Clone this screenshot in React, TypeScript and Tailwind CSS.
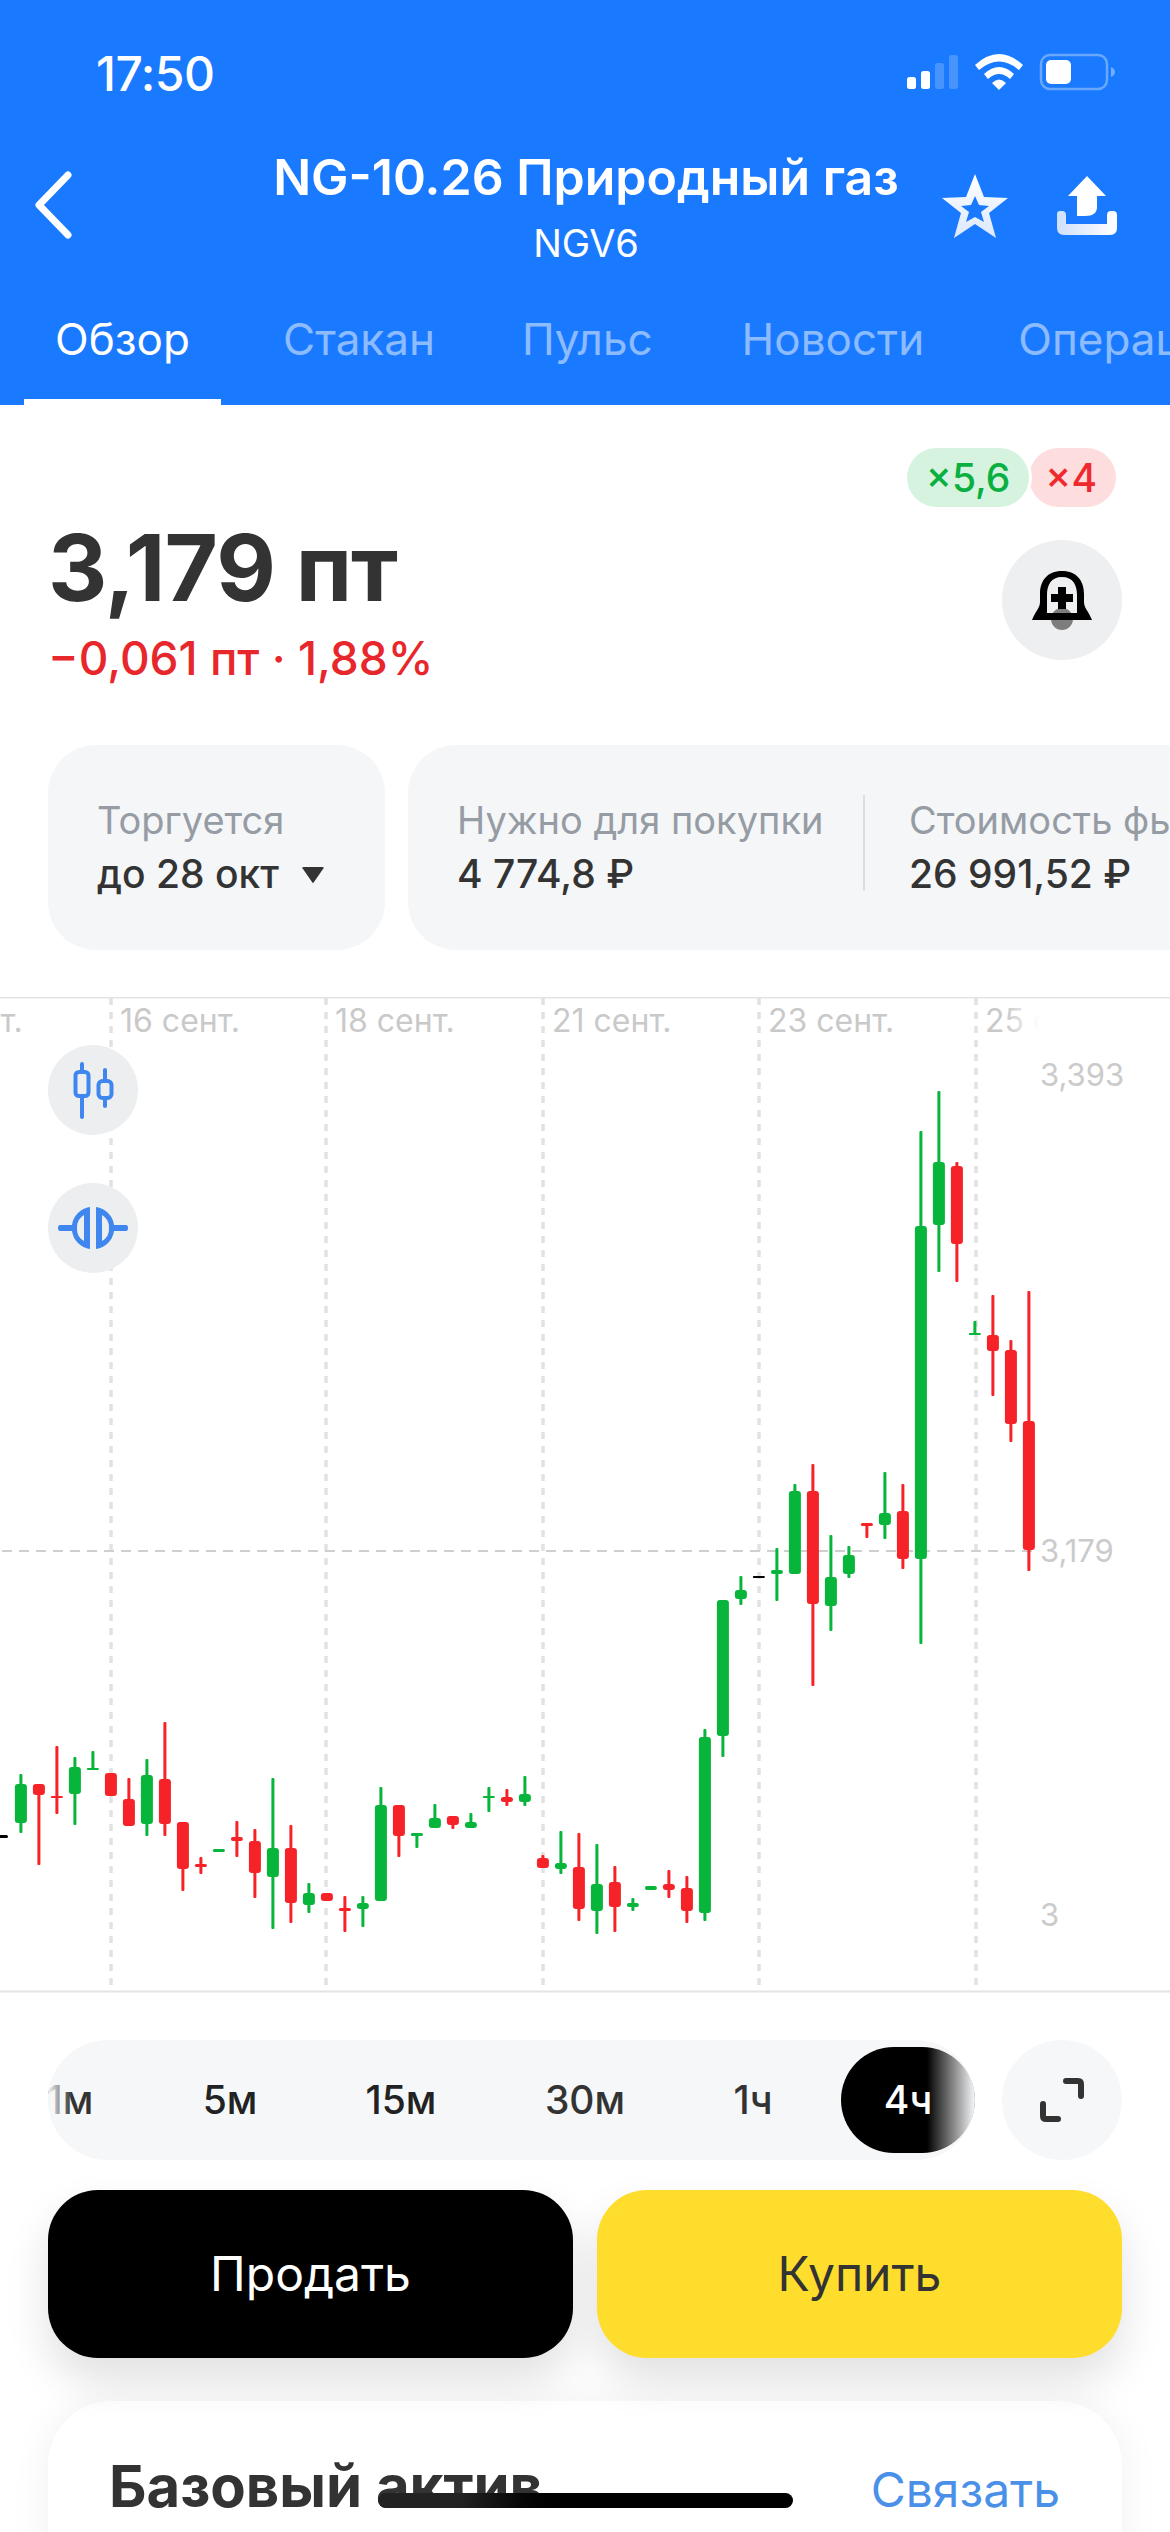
import React from "react";

const G = "#06b539";
const R = "#f52228";
const K = "#000000";
const raw: Array<[number, string, number, number, number, number]> = [
  [0, G, 1774, 1833, 1784, 1823],
  [1, R, 1784, 1865, 1784, 1795],
  [2, R, 1746, 1814, 1796, 1798],
  [3, G, 1757, 1825, 1767, 1794],
  [4, G, 1751, 1770, 1768, 1770],
  [5, R, 1773, 1796, 1773, 1796],
  [6, R, 1778, 1826, 1799, 1826],
  [7, G, 1759, 1836, 1775, 1824],
  [8, R, 1722, 1836, 1779, 1824],
  [9, R, 1822, 1891, 1822, 1869],
  [10, R, 1857, 1874, 1864, 1867],
  [11, G, 1849, 1852, 1849, 1852],
  [12, R, 1821, 1857, 1837, 1841],
  [13, R, 1829, 1898, 1841, 1873],
  [14, G, 1778, 1929, 1848, 1877],
  [15, R, 1825, 1923, 1848, 1903],
  [16, G, 1883, 1913, 1893, 1905],
  [17, R, 1893, 1901, 1893, 1901],
  [18, R, 1896, 1932, 1908, 1911],
  [19, G, 1896, 1927, 1903, 1909],
  [20, G, 1787, 1901, 1805, 1901],
  [21, R, 1805, 1857, 1805, 1836],
  [22, G, 1833, 1848, 1833, 1836],
  [23, G, 1804, 1828, 1818, 1828],
  [24, R, 1816, 1829, 1816, 1825],
  [25, G, 1813, 1828, 1822, 1828],
  [26, G, 1787, 1812, 1796, 1798],
  [27, R, 1789, 1806, 1797, 1802],
  [28, G, 1776, 1806, 1794, 1802],
  [29, R, 1855, 1868, 1858, 1868],
  [30, G, 1831, 1874, 1863, 1869],
  [31, R, 1833, 1921, 1867, 1909],
  [32, G, 1844, 1934, 1884, 1911],
  [33, R, 1866, 1932, 1882, 1907],
  [34, G, 1898, 1911, 1903, 1907],
  [35, G, 1886, 1890, 1886, 1890],
  [36, R, 1870, 1898, 1884, 1890],
  [37, R, 1876, 1923, 1888, 1911],
  [38, G, 1729, 1921, 1737, 1913],
  [39, G, 1600, 1757, 1600, 1736],
  [40, G, 1576, 1605, 1590, 1599],
  [41, K, 1576, 1578, 1576, 1578],
  [42, G, 1548, 1601, 1570, 1574],
  [43, G, 1484, 1574, 1491, 1574],
  [44, R, 1464, 1686, 1491, 1604],
  [45, G, 1535, 1631, 1577, 1606],
  [46, G, 1546, 1578, 1555, 1574],
  [47, R, 1523, 1538, 1523, 1526],
  [48, G, 1472, 1539, 1513, 1525],
  [49, R, 1484, 1569, 1511, 1559],
  [50, G, 1131, 1644, 1226, 1559],
  [51, G, 1091, 1272, 1162, 1225],
  [52, R, 1162, 1282, 1166, 1244],
  [53, G, 1321, 1335, 1333, 1335],
  [54, R, 1295, 1396, 1335, 1351],
  [55, R, 1340, 1442, 1350, 1424],
  [56, R, 1291, 1571, 1421, 1550],
];

const grid = [111, 326, 543, 759, 976];
const dates: Array<[number, string]> = [
  [-98, "14 сент."],
  [120, "16 сент."],
  [335, "18 сент."],
  [552, "21 сент."],
  [768, "23 сент."],
];

function Chart() {
  return (
    <svg viewBox="0 997 1170 996" width={1170} height={996} className="block">
      <defs>
        <linearGradient id="fadeDate" gradientUnits="userSpaceOnUse" x1="1006" y1="0" x2="1040" y2="0">
          <stop offset="0" stopColor="#c9c9c9" />
          <stop offset="1" stopColor="#c9c9c9" stopOpacity="0" />
        </linearGradient>
      </defs>
      <line x1="0" y1="997.5" x2="1170" y2="997.5" stroke="#e4e4e6" strokeWidth="2" />
      <line x1="0" y1="1991.5" x2="1170" y2="1991.5" stroke="#e4e4e6" strokeWidth="2" />
      {grid.map((x) => (
        <line key={x} x1={x} y1="998" x2={x} y2="1988" stroke="#e2e2e2" strokeWidth="3.5" strokeDasharray="7 7" />
      ))}
      <line x1="2" y1="1551" x2="1036" y2="1551" stroke="#cfcfcf" strokeWidth="2" strokeDasharray="10 7" />
      {dates.map(([x, t]) => (
        <text key={t} x={x} y="1032" fontSize="32" fill="#c9c9c9" fontFamily="Inter, sans-serif">
          {t}
        </text>
      ))}
      <text x="985" y="1032" fontSize="32" fill="url(#fadeDate)" fontFamily="Inter, sans-serif">
        25 сент.
      </text>
      <text x="1040" y="1086" fontSize="31" fill="#cbcbcb" fontFamily="Inter, sans-serif">3,393</text>
      <text x="1040" y="1562" fontSize="31" fill="#cbcbcb" fontFamily="Inter, sans-serif">3,179</text>
      <text x="1040" y="1926" fontSize="31" fill="#cbcbcb" fontFamily="Inter, sans-serif">3</text>
      <rect x="-4" y="1835" width="12" height="3" rx="1.5" fill="#000" />
      {raw.map(([i, c, wt, wb, bt, bb]) => {
        const x = 20.9 + 18 * i;
        const h = Math.max(bb - bt, 2);
        return (
          <g key={i} fill={c}>
            <rect x={x - 1.5} y={wt} width="3" height={wb - wt} rx="1" />
            <rect x={x - 6} y={bt} width="12" height={h} rx={Math.min(3, h / 2)} />
          </g>
        );
      })}
    </svg>
  );
}

function StatusIcons() {
  return (
    <svg width="212" height="40" viewBox="905 54 212 40" className="block">
      <rect x="907" y="79" width="9" height="12" rx="2.5" fill="#fff" />
      <rect x="921" y="73" width="9" height="18" rx="2.5" fill="#fff" />
      <rect x="935" y="65" width="9" height="26" rx="2.5" fill="#fff" fillOpacity="0.2" />
      <rect x="949" y="57" width="9" height="34" rx="2.5" fill="#fff" fillOpacity="0.2" />
      <path d="M975 67 Q999 45 1023 67 L1019 72 Q999 55 979 72 Z" fill="#fff" />
      <path d="M984 76 Q999 62 1014 76 L1010 81 Q999 71 988 81 Z" fill="#fff" />
      <path d="M992 85 Q999 78 1006 85 L999 92 Z" fill="#fff" />
      <rect x="1041" y="57" width="66" height="34" rx="9" fill="none" stroke="#fff" strokeOpacity="0.35" strokeWidth="2.5" />
      <rect x="1046" y="62" width="25" height="24" rx="5" fill="#fff" />
      <path d="M1111 69 Q1115 71 1115 74 Q1115 77 1111 79 Z" fill="#fff" fillOpacity="0.4" />
    </svg>
  );
}

function NavIcons() {
  return (
    <div className="flex items-center gap-[46px]">
      <svg width="70" height="66" viewBox="0 0 70 66" className="block">
        <defs>
          <linearGradient id="g1" x1="0" y1="0" x2="0" y2="1">
            <stop offset="0" stopColor="#ffffff" />
            <stop offset="1" stopColor="#dbe8fd" />
          </linearGradient>
        </defs>
        <path
          fillRule="evenodd"
          fill="url(#g1)"
          d="M35 1 L44 24 L68 25 L49 40 L56 65 L35 51 L14 65 L21 40 L2 25 L26 24 Z M35 23 L31 32 L21 33 L29 39 L26 49 L35 44 L44 49 L41 39 L49 33 L39 32 Z"
        />
      </svg>
      <svg width="62" height="62" viewBox="0 0 62 62" className="block">
        <defs>
          <linearGradient id="g2" x1="0" y1="0" x2="1" y2="0">
            <stop offset="0" stopColor="#cfe0fb" />
            <stop offset="1" stopColor="#ffffff" />
          </linearGradient>
        </defs>
        <path d="M31 1 L50 21 L41 21 L41 32 Q41 41 29 41 L21 41 L21 21 L12 21 Z" fill="#fff" />
        <path d="M1 39 Q1 36 4 36 L6 36 Q10 36 10 40 L10 49 L51 49 L51 40 Q51 36 55 36 L57 36 Q61 36 61 40 L61 53 Q61 60 54 60 L8 60 Q1 60 1 53 Z" fill="url(#g2)" />
      </svg>
    </div>
  );
}

function Bell() {
  return (
    <svg width="60" height="60" viewBox="0 0 60 60" className="block">
      <circle cx="30" cy="49" r="11" fill="#7d7d7d" />
      <path
        fillRule="evenodd"
        fill="#000"
        d="M30 1 C15 1 8 11 8 24 L8 32 C8 38 3 42 0 50 L60 50 C57 42 52 38 52 32 L52 24 C52 11 45 1 30 1 Z M30 7 C41 7 45 15 45 25 L45 43 L15 43 L15 25 C15 15 19 7 30 7 Z"
      />
      <path d="M26 17 L34 17 L34 24 L41 24 L41 32 L34 32 L34 39 L26 39 L26 32 L19 32 L19 24 L26 24 Z" fill="#000" />
    </svg>
  );
}

export default function App() {
  return (
    <div className="w-[1170px] h-[2532px] overflow-hidden bg-white relative font-['Inter',sans-serif] text-[#333333]">
      <header className="h-[405px] bg-[#1a7aff] text-white relative">
        <div className="flex items-start justify-between pl-[96px] pr-[53px] pt-[52px] h-[150px]">
          <span className="text-[48px] leading-[44px] font-medium tracking-[-0.5px]">17:50</span>
          <StatusIcons />
        </div>
        <div className="flex items-start h-[116px] pl-[34px] pr-[52px]">
          <div className="w-[192px] shrink-0 mt-[21px]">
            <svg width="40" height="68" viewBox="0 0 40 68" className="block">
              <path d="M34 4 L5 34 L34 64" fill="none" stroke="#fff" strokeWidth="7" strokeLinecap="round" strokeLinejoin="round" />
            </svg>
          </div>
          <div className="flex-1 flex flex-col items-center mt-0 pl-[18px]">
            <div className="text-[50px] leading-[54px] font-semibold whitespace-nowrap">NG-10.26 Природный газ</div>
            <div className="text-[38px] leading-[44px] mt-[17px]">NGV6</div>
          </div>
          <div className="w-[190px] shrink-0 mt-[23px] flex justify-end">
            <NavIcons />
          </div>
        </div>
        <nav className="flex items-start pl-[24px] h-[139px] overflow-hidden text-[44px] leading-[54px] text-white/50 whitespace-nowrap">
          <div className="w-[197px] h-[139px] flex flex-col items-center justify-between text-white shrink-0">
            <span className="mt-[46px]">Обзор</span>
            <span className="block w-full h-[6px] bg-white" />
          </div>
          <span className="ml-[62px] mt-[46px]">Стакан</span>
          <span className="ml-[87px] mt-[46px]">Пульс</span>
          <span className="ml-[89px] mt-[46px]">Новости</span>
          <span className="ml-[94px] mt-[46px]">Операции</span>
        </nav>
      </header>

      <section className="h-[592px] relative">
        <div className="flex flex-col items-end pt-[43px] pr-[48px]">
          <div className="flex items-center pr-[6px]">
            <div className="h-[59px] px-[19px] rounded-full bg-[#d6f3e0] text-[#0ab03f] text-[39px] leading-[59px] font-medium ring-[3px] ring-white z-10">
              ×5,6
            </div>
            <div className="h-[59px] pl-[16px] pr-[19px] rounded-full bg-[#fedddf] text-[#ee2a2e] text-[39px] leading-[59px] font-medium">
              ×4
            </div>
          </div>
        </div>
        <div className="flex items-start justify-between pl-[48px] pr-[48px] mt-[33px]">
          <div className="-mt-[22px]">
            <div className="text-[92px] leading-[100px] font-bold tracking-[-1px] text-[#333333]">3,179 пт</div>
            <div className="text-[46px] leading-[54px] font-medium text-[#e7272c] mt-[13px]">−0,061 пт · 1,88%</div>
          </div>
          <div className="w-[120px] h-[120px] rounded-full bg-[#eeeff1] flex items-center justify-center">
            <Bell />
          </div>
        </div>
        <div className="flex gap-[23px] pl-[48px] mt-[60px] h-[205px] whitespace-nowrap leading-[50px]">
          <div className="w-[337px] shrink-0 rounded-[48px] bg-[#f5f6f8] pl-[49px] pt-[50px]">
            <div className="text-[#969ca4] text-[38px]">Торгуется</div>
            <div className="text-[39px] font-medium flex items-center mt-[4px]">
              до 28 окт
              <svg width="24" height="18" viewBox="0 0 24 18" className="ml-[22px] mt-[3px]">
                <path d="M2 2 Q0 0 3 0 L21 0 Q24 0 22 2 L13 15 Q12 17 11 15 Z" fill="#333" />
              </svg>
            </div>
          </div>
          <div className="flex-1 rounded-l-[48px] bg-[#f5f6f8] flex pt-[50px] pl-[49px] overflow-hidden">
            <div className="w-[408px] shrink-0 h-[96px] border-r-2 border-[#dcdee2]">
              <div className="text-[#969ca4] text-[38px]">Нужно для покупки</div>
              <div className="text-[39px] font-medium mt-[4px]">4 774,8 ₽</div>
            </div>
            <div className="pl-[44px] shrink-0">
              <div className="text-[#969ca4] text-[38px]">Стоимость фьючерса</div>
              <div className="text-[39px] font-medium mt-[4px]">26 991,52 ₽</div>
            </div>
          </div>
        </div>
      </section>

      <section className="relative h-[996px]">
        <Chart />
        <div className="absolute left-[48px] top-[48px] w-[90px] h-[90px] rounded-full bg-[#eceef0] flex items-center justify-center">
          <svg width="60" height="60" viewBox="0 0 60 60" className="block">
            <g fill="none" stroke="#3f86ee" strokeWidth="4" strokeLinecap="round">
              <line x1="19" y1="4" x2="19" y2="12" />
              <line x1="19" y1="36" x2="19" y2="57" />
              <rect x="12.5" y="12" width="13" height="24" rx="3.5" />
              <line x1="42" y1="10" x2="42" y2="21" />
              <line x1="42" y1="38" x2="42" y2="46" />
              <rect x="35.5" y="21" width="13" height="17" rx="4" />
            </g>
          </svg>
        </div>
        <div className="absolute left-[48px] top-[186px] w-[90px] h-[90px] rounded-full bg-[#eceef0] flex items-center justify-center">
          <svg width="70" height="48" viewBox="0 0 70 48" className="block">
            <path
              fillRule="evenodd"
              fill="#3f86ee"
              d="M32 3 L32 45 A21 21 0 0 1 14 27 L2 27 Q0 27 0 24 Q0 21 2 21 L14 21 A21 21 0 0 1 32 3 Z M26 11 A14 14 0 0 0 19 24 A14 14 0 0 0 26 37 Z"
            />
            <path
              fillRule="evenodd"
              fill="#3f86ee"
              d="M38 3 L38 45 A21 21 0 0 0 56 27 L68 27 Q70 27 70 24 Q70 21 68 21 L56 21 A21 21 0 0 0 38 3 Z M44 11 A14 14 0 0 1 51 24 A14 14 0 0 1 44 37 Z"
            />
          </svg>
        </div>
      </section>

      <section className="px-[48px] pt-[47px]">
        <div className="flex items-center justify-between">
          <div className="relative w-[927px] h-[120px] rounded-full bg-[#f6f7f8] overflow-hidden flex items-center text-[39px] font-medium">
            <span className="w-[134px] -ml-[45px] shrink-0 text-center">1м</span>
            <span className="w-[186px] shrink-0 text-center text-[#222222]">5м</span>
            <span className="w-[156px] shrink-0 text-center text-[#222222]">15м</span>
            <span className="w-[212px] shrink-0 text-center">30м</span>
            <span className="w-[124px] shrink-0 text-center">1ч</span>
            <span className="ml-[26px] w-[134px] h-[106px] shrink-0 rounded-full bg-black text-white flex items-center justify-center">
              4ч
            </span>
            <div className="absolute left-0 top-0 h-full w-[24px] bg-gradient-to-r from-[#f6f7f8] to-transparent" />
            <div className="absolute right-0 top-0 h-full w-[48px] bg-gradient-to-l from-[#f6f7f8] to-transparent" />
          </div>
          <div className="w-[120px] h-[120px] rounded-full bg-[#f6f7f8] flex items-center justify-center">
            <svg width="44" height="44" viewBox="0 0 44 44" className="block">
              <path d="M26 3 L38 3 Q41 3 41 6 L41 18" fill="none" stroke="#333" strokeWidth="6" strokeLinecap="round" />
              <path d="M18 41 L6 41 Q3 41 3 38 L3 26" fill="none" stroke="#333" strokeWidth="6" strokeLinecap="round" />
            </svg>
          </div>
        </div>
        <div className="flex gap-[24px] mt-[30px] text-[48px]">
          <button className="flex-1 h-[168px] rounded-[50px] bg-black text-white shadow-[0_22px_44px_rgba(0,0,0,0.12)]">
            Продать
          </button>
          <button className="flex-1 h-[168px] rounded-[50px] bg-[#ffdd2d] text-[#333333] shadow-[0_22px_44px_rgba(0,0,0,0.12)]">
            Купить
          </button>
        </div>
        <div className="mt-[43px] h-[300px] rounded-[64px] bg-white shadow-[0_0_40px_rgba(0,0,0,0.06)] flex items-baseline justify-between pl-[61px] pr-[62px] pt-[49px]">
          <span className="text-[58px] leading-[72px] font-bold">Базовый актив</span>
          <span className="text-[48px] leading-[72px] text-[#4a90e8]">Связать</span>
        </div>
      </section>

      <div className="absolute left-[378px] top-[2493px] w-[415px] h-[15px] rounded-full bg-gradient-to-r from-[#222222] to-black from-20% to-50%" />
    </div>
  );
}
